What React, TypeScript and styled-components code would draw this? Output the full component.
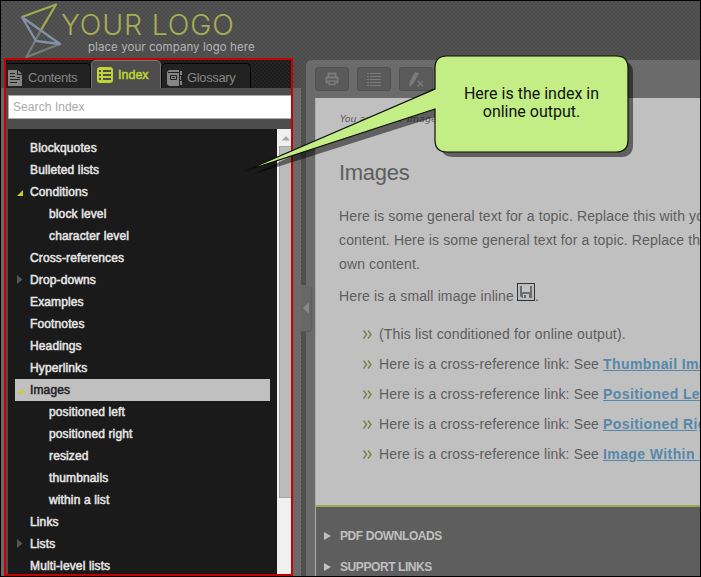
import React from "react";
import styled, { createGlobalStyle } from "styled-components";

const Global = createGlobalStyle`
  * { box-sizing: border-box; }
  body { margin: 0; background: #000; overflow: hidden; }
  p, h1, ul { margin: 0; padding: 0; }
`;

const Frame = styled.div`
  position: relative;
  width: 701px;
  height: 577px;
  overflow: hidden;
  border: 1px solid #000;
  background-color: #535353;
  background-image: radial-gradient(circle at 1px 1px, #4a4a4a 0.7px, transparent 0.9px),
    radial-gradient(circle at 3px 3px, #4a4a4a 0.7px, transparent 0.9px);
  background-size: 4px 4px;
  font-family: "Liberation Sans", Arial, sans-serif;
  display: flex;
  flex-direction: column;
`;
const Header = styled.header`
  height: 57px;
  flex: none;
  display: flex;
  padding-left: 20px;
`;
const Brand = styled.div`
  padding: 6px 0 0 0;
  white-space: nowrap;
`;
const BrandName = styled.div`
  font: 300 28.5px/35px "Inter", "Liberation Sans", sans-serif;
  color: #a5ae55;
  letter-spacing: 0.8px;
  margin-left: -1px;
`;
const Slogan = styled.div`
  font: 400 11.5px/13px "Inter", "Liberation Sans", sans-serif;
  color: #b5b5b5;
  padding-left: 26px;
  letter-spacing: 0.06px;
  margin-top: -1px;
`;
const Body = styled.div`
  flex: 1;
  min-height: 0;
  display: flex;
`;
const Gutter = styled.div<{ $w: number }>`
  width: ${(p) => p.$w}px;
  flex: none;
  margin-top: 30px;
  background: #6a6a6a;
`;
const Sidebar = styled.aside`
  width: 289px;
  flex: none;
  display: flex;
  flex-direction: column;
  border: 2px solid #c80000;
  background: #4d4d4d;
`;
const Tabs = styled.div`
  display: flex;
  align-items: flex-end;
  height: 28px;
  flex: none;
  background-color: #252525;
  background-image: radial-gradient(circle at 1px 1px, #1c1c1c 0.7px, transparent 0.9px),
    radial-gradient(circle at 3px 3px, #1c1c1c 0.7px, transparent 0.9px);
  background-size: 4px 4px;
`;
const Tab = styled.div<{ $w: number; $active?: boolean; $first?: boolean }>`
  width: ${(p) => p.$w}px;
  height: ${(p) => (p.$active ? 28 : 25)}px;
  display: flex;
  align-items: center;
  gap: 5px;
  padding: ${(p) => (p.$active ? "0 0 0 5px" : p.$first ? "3px 0 0 2px" : "3px 0 0 5px")};
  border: 1px solid ${(p) => (p.$active ? "#777" : "#050505")};
  border-left-width: ${(p) => (p.$first ? 0 : 1)}px;
  border-bottom: 0;
  border-radius: ${(p) => (p.$first ? "0 5px 0 0" : "5px 5px 0 0")};
  background: ${(p) => (p.$active ? "#4d4d4d" : "#222")};
  color: ${(p) => (p.$active ? "#bfd435" : "#858585")};
  svg { flex: none; }
`;
const TabText = styled.span<{ $bold?: boolean }>`
  font-size: ${(p) => (p.$bold ? 12.5 : 13)}px;
  letter-spacing: ${(p) => (p.$bold ? 0 : -0.35)}px;
  -webkit-text-stroke: ${(p) => (p.$bold ? 0.5 : 0)}px currentColor;
`;
const Search = styled.div`
  height: 24px;
  flex: none;
  margin: 7px 0 10px 2px;
  border: 1px solid #aaa;
  border-right: 0;
  background: #fff;
  color: #aaa;
  font-size: 12px;
  letter-spacing: 0.08px;
  line-height: 22px;
  padding-left: 4px;
`;
const ListArea = styled.div`
  flex: 1;
  min-height: 0;
  margin-left: 2px;
  display: flex;
  background: #1a1a1a;
`;
const IndexList = styled.div`
  flex: 1;
  padding: 8px 7px 0;
  overflow: hidden;
`;
const Entry = styled.div<{ $child?: boolean; $selected?: boolean }>`
  display: flex;
  align-items: center;
  height: 22px;
  padding-left: ${(p) => (p.$child ? 34 : 2)}px;
  background: ${(p) => (p.$selected ? "#c0c0c0" : "transparent")};
  color: ${(p) => (p.$selected ? "#222" : "#e6e6e6")};
  font-size: 12px;
  letter-spacing: 0.13px;
  -webkit-text-stroke: 0.5px currentColor;
  white-space: nowrap;
`;
const Marker = styled.span`
  width: 13px;
  height: 10px;
  display: flex;
  svg { display: block; flex: none; }
`;
const Scroll = styled.div`
  width: 14px;
  background: #f0f0f0;
  display: flex;
  flex-direction: column;
  padding-left: 2px;
`;
const ScrollUp = styled.div`
  height: 17px;
  padding: 7px 0 0 3px;
  svg { display: block; }
`;
const Thumb = styled.div`
  height: 352px;
  background: #bcbcbc;
  border: 1px solid #a6a6a6;
  border-right: 0;
`;
const Splitter = styled.div`
  width: 5px;
  flex: none;
  padding-top: 227px;
`;
const Handle = styled.div`
  width: 10px;
  height: 46px;
  position: relative;
  z-index: 1;
  padding: 17px 0 0 2px;
  background: #676767;
  border-radius: 0 3px 3px 0;
  box-shadow: 1px 1px 1px #5c5c5c;
  svg { display: block; }
`;
const Content = styled.main`
  flex: 1;
  min-width: 0;
  margin-top: 2px;
  padding: 7px 0 0 9px;
  border-radius: 6px 0 0 0;
  background: #6b6b6b;
  display: flex;
  flex-direction: column;
`;
const Toolbar = styled.div`
  display: flex;
  gap: 8px;
  height: 31px;
  flex: none;
`;
const ToolButton = styled.div`
  width: 34px;
  height: 24px;
  border: 1px solid #505050;
  border-radius: 3px;
  background: #5a5a5a;
  display: flex;
  align-items: center;
  justify-content: center;
`;
const Page = styled.article`
  height: 409px;
  flex: none;
  border-left: 1px solid #aaa;
  border-bottom: 2px solid #a0a850;
  background: #c0c0c0;
  color: #5d5d5d;
  padding: 14px 0 0 23px;
  white-space: nowrap;
  overflow: hidden;
`;
const Crumbs = styled.p`
  font: italic 9.5px/14px "DejaVu Sans", Verdana, sans-serif;
  display: flex;
  gap: 4px;
  padding-left: 1px;
`;
const Title = styled.h1`
  font-size: 22px;
  font-weight: 400;
  line-height: 30px;
  letter-spacing: -0.3px;
  margin: 32px 0 16px;
`;
const Para = styled.p`
  font-size: 14px;
  line-height: 24px;
  letter-spacing: 0.135px;
  margin-bottom: 8px;
`;
const Inline = styled.svg`
  vertical-align: 0;
  margin: -4px 0 0 -1px;
`;
const Bullets = styled.ul`
  list-style: none;
  padding-top: 3px;
`;
const Bullet = styled.li`
  display: flex;
  align-items: center;
  height: 30px;
  padding-left: 24px;
  gap: 7px;
  font-size: 14px;
  letter-spacing: 0.15px;
  white-space: pre;
  svg { flex: none; }
`;
const Link = styled.b`
  color: #5588aa;
  text-decoration: underline;
  letter-spacing: 0.4px;
`;
const Footer = styled.footer`
  flex: 1;
  border-left: 1px solid #aaa;
  background: #5e5e5e;
  padding: 13px 0 0 8px;
  overflow: hidden;
`;
const Drop = styled.div`
  height: 31px;
  display: flex;
  align-items: center;
  gap: 9px;
  color: #c0c0c0;
  font-size: 12px;
  font-weight: 700;
  letter-spacing: -0.42px;
  white-space: nowrap;
`;
const CalloutShape = styled.svg`
  position: absolute;
  left: -1px;
  top: -1px;
  z-index: 2;
`;
const CalloutText = styled.div`
  position: absolute;
  left: 434px;
  top: 84px;
  width: 193px;
  z-index: 3;
  text-align: center;
  color: #111;
  font: 400 16px/18px Roboto, sans-serif;
`;

type Item = { t: string; child?: boolean; open?: boolean; closed?: boolean; selected?: boolean };
const items: Item[] = [
  { t: "Blockquotes" },
  { t: "Bulleted lists" },
  { t: "Conditions", open: true },
  { t: "block level", child: true },
  { t: "character level", child: true },
  { t: "Cross-references" },
  { t: "Drop-downs", closed: true },
  { t: "Examples" },
  { t: "Footnotes" },
  { t: "Headings" },
  { t: "Hyperlinks" },
  { t: "Images", open: true, selected: true },
  { t: "positioned left", child: true },
  { t: "positioned right", child: true },
  { t: "resized", child: true },
  { t: "thumbnails", child: true },
  { t: "within a list", child: true },
  { t: "Links" },
  { t: "Lists", closed: true },
  { t: "Multi-level lists" },
];
const links = ["Thumbnail Images", "Positioned Left", "Positioned Right", "Image Within a List"];

const Logo = () => (
  <svg width="41" height="57" viewBox="21 1 41 57" fill="none" strokeWidth="2.300" strokeLinejoin="round">
    <path d="M41 30L26.500 57L60 44" stroke="#737d77" />
    <path d="M41 30L56 4.500L22 17" stroke="#a0aa52" />
    <path d="M22 17L60 44L36 41Z" stroke="#8490a5" />
  </svg>
);
const ContentsIcon = () => (
  <svg width="15" height="16" viewBox="0 0 15 16">
    <path d="M0 0H9V5H14V16H0Z M10 0L14 4H10Z" fill="#858585" />
    <path d="M2 3.5H7M2 6.5H7M2 9.5H12M2 12.5H9M9 7.5H12" stroke="#222" />
  </svg>
);
const IndexIcon = () => (
  <svg width="16" height="16" viewBox="0 0 16 16">
    <rect width="16" height="16" rx="3" fill="#bfd435" />
    <path d="M2 4H4M2 8H4M2 12H4M6 4H14M6 8H14M6 12H14" stroke="#4d4d4d" strokeWidth="2" />
  </svg>
);
const GlossaryIcon = () => (
  <svg width="15" height="16" viewBox="0 0 15 16">
    <path d="M2 0H12V16H2L0 14V2ZM13 1H15V5H13ZM13 6H14V10H13ZM13 11H15V15H13Z" fill="#858585" />
    <path d="M1 2.5H12M3.5 5.5H9.5V9.5H3.5ZM5 7.5H8" stroke="#222" fill="none" />
  </svg>
);
const PrintIcon = () => (
  <svg width="14" height="14" viewBox="0 0 14 14" fill="none" stroke="#7b7b7b" strokeWidth="2">
    <path d="M3.500 5V1.500H10.500V5M3 10.500H1.500V5.500H12.500V10.500H11" />
    <path d="M4 9H10V12.500H4Z" strokeWidth="1.500" />
  </svg>
);
const ListIcon = () => (
  <svg width="14" height="13" viewBox="0 0 14 13">
    <path d="M0 .5H2M0 3.500H2M0 6.500H2M0 9.500H2M0 12.500H2M3 .5H14M3 3.500H14M3 6.500H14M3 9.500H14M3 12.500H14" stroke="#7b7b7b" />
  </svg>
);
const PenIcon = () => (
  <svg width="16" height="17" viewBox="0 0 16 17">
    <path d="M7 1L11 2L5 13L1 16L2 10Z" fill="#7b7b7b" />
    <path d="M9.500 10L15 15.500M15 10L9.500 15.500" stroke="#7b7b7b" strokeWidth="1.500" />
  </svg>
);
const Disk = () => (
  <Inline width="18" height="18" viewBox="0 0 18 18">
    <rect x="0.500" y="0.500" width="17" height="17" fill="#bcbcbc" stroke="#333" />
    <path d="M3 3H15V15H5L3 13Z" fill="#6d6d6d" />
    <path d="M5 3H13V9H5ZM6 11H12V15H6Z" fill="#bfc3c3" />
    <path d="M7 12H9V15H7Z" fill="#666" />
  </Inline>
);
const Chevrons = () => (
  <svg width="9" height="9" viewBox="0 0 9 9" fill="none" stroke="#788247" strokeWidth="1.400">
    <path d="M0.500 0.500L3.500 4.500L0.500 8.500M5 0.500L8 4.500L5 8.500" />
  </svg>
);

export default function App() {
  return (
    <>
      <Global />
      <Frame>
        <Header>
          <Logo />
          <Brand>
            <BrandName>YOUR LOGO</BrandName>
            <Slogan>place your company logo here</Slogan>
          </Brand>
        </Header>
        <Body>
          <Gutter $w={3} />
          <Sidebar>
            <Tabs>
              <Tab $w={85} $first>
                <ContentsIcon />
                <TabText>Contents</TabText>
              </Tab>
              <Tab $w={70} $active>
                <IndexIcon />
                <TabText $bold>Index</TabText>
              </Tab>
              <Tab $w={90}>
                <GlossaryIcon />
                <TabText>Glossary</TabText>
              </Tab>
            </Tabs>
            <Search>Search Index</Search>
            <ListArea>
              <IndexList>
                {items.map((i) => (
                  <Entry key={i.t} $child={i.child} $selected={i.selected}>
                    {!i.child && (
                      <Marker>
                        {i.open && (
                          <svg width="6" height="10"><path d="M6 3V9H0Z" fill="#bfd435" /></svg>
                        )}
                        {i.closed && (
                          <svg width="6" height="10"><path d="M0 0V9L5.500 4.500Z" fill="#555" /></svg>
                        )}
                      </Marker>
                    )}
                    {i.t}
                  </Entry>
                ))}
              </IndexList>
              <Scroll>
                <ScrollUp>
                  <svg width="8" height="5"><path d="M0 4.500L4 0L8 4.500Z" fill="#a5a5a5" /></svg>
                </ScrollUp>
                <Thumb />
              </Scroll>
            </ListArea>
          </Sidebar>
          <Gutter $w={8} />
          <Splitter>
            <Handle>
              <svg width="6" height="12"><path d="M6 0V12L0 6Z" fill="#888" /></svg>
            </Handle>
          </Splitter>
          <Content>
            <Toolbar>
              <ToolButton><PrintIcon /></ToolButton>
              <ToolButton><ListIcon /></ToolButton>
              <ToolButton><PenIcon /></ToolButton>
            </Toolbar>
            <Page>
              <Crumbs><span>You are here:</span><span>Images</span></Crumbs>
              <Title>Images</Title>
              <Para>
                Here is some general text for a topic. Replace this with your own<br />
                content. Here is some general text for a topic. Replace this with your<br />
                own content.
              </Para>
              <Para>Here is a small image inline <Disk />.</Para>
              <Bullets>
                <Bullet>
                  <Chevrons />
                  <span>(This list conditioned for online output).</span>
                </Bullet>
                {links.map((l) => (
                  <Bullet key={l}>
                    <Chevrons />
                    <span>Here is a cross-reference link: See <Link>{l}</Link></span>
                  </Bullet>
                ))}
              </Bullets>
            </Page>
            <Footer>
              {["PDF DOWNLOADS", "SUPPORT LINKS"].map((t) => (
                <Drop key={t}>
                  <svg width="7" height="8"><path d="M0 0V8L7 4Z" fill="#c0c0c0" /></svg>
                  {t}
                </Drop>
              ))}
            </Footer>
          </Content>
        </Body>
        <CalloutShape width="701" height="200">
          <path d="M448 61H621Q633 61 633 73V145Q633 157 621 157H453Q441 157 441 145V115L252 175L441 85V73Z" fill="#000" fillOpacity="0.5" />
          <path d="M447 56H616Q628 56 628 68V140Q628 152 616 152H447Q435 152 435 140V109L245 171L435 89V68Q435 56 447 56Z" fill="#c2ee85" stroke="#0c0f08" strokeWidth="1.200" />
        </CalloutShape>
        <CalloutText>Here is the index in<br />online output.</CalloutText>
      </Frame>
    </>
  );
}
